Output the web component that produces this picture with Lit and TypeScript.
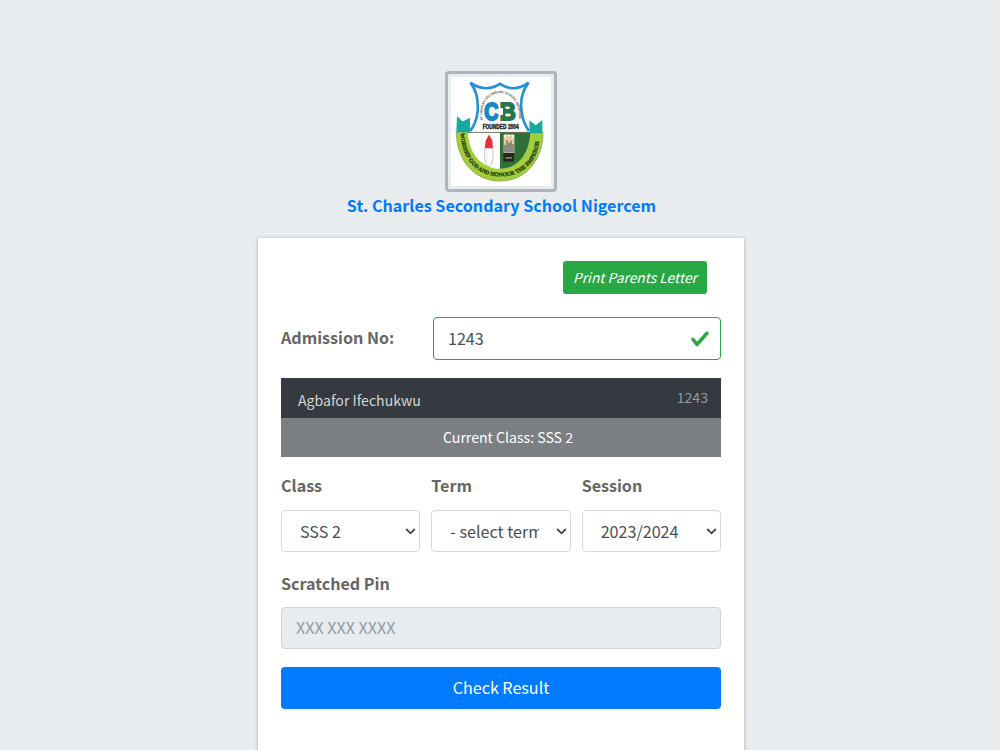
import { LitElement, html, css } from 'lit'
import { customElement, property, state } from 'lit/decorators.js'

@customElement('school-crest')
export class SchoolCrest extends LitElement {
    static styles = css`
        :host {
            display: block;
            flex: none;
            box-sizing: border-box;
            width: 112px;
            height: 121px;
            padding: 3px;
            border: 3px solid #adb5bd;
            border-radius: 4px;
        }

        svg {
            display: block;
            width: 100px;
            height: 109px;
            background: #fff;
        }

        .motto {
            font: bold 17px 'Liberation Serif', serif;
            fill: #1d3a12;
            stroke: #1d3a12;
            stroke-width: 0.8;
        }

        .name {
            font: bold 10px 'Liberation Sans', sans-serif;
            fill: #555;
        }

        .initials {
            font: bold 72px 'Liberation Sans', sans-serif;
            stroke-width: 6;
        }

        .founded {
            font: bold 19px 'Liberation Sans', sans-serif;
            fill: #222;
            stroke: #222;
            stroke-width: 1.2;
        }
    `

    render() {
        return html`
            <svg viewBox="33 33 300 330" preserveAspectRatio="none">
                <path d="M49 200H309C309 286 256 348 180 348S49 286 49 200Z" fill="#a2ce3a" stroke="#7d9a4a" stroke-width="2" />
                <path d="M84 201H271C269 264 234 311 180 311S86 264 84 201Z" fill="#fff" />
                <path d="M180 201H271C269 264 234 311 180 311Z" fill="#2f7038" />
                <path d="M51 151L68 168L90 156V200H49Z" fill="#16aaa0" />
                <path d="M268 164L287 179L307 163V203H269Z" fill="#16aaa0" />
                <path
                    d="M90 50Q136 84 180 52Q222 84 267 50Q239 84 244 132Q248 172 267 198H91Q108 174 113 137Q117 82 90 50Z"
                    fill="#fff"
                />
                <path
                    d="M91 196Q109 172 113 137Q117 82 91 50Q136 82 180 54Q222 82 266 50Q239 84 244 132Q248 172 267 196"
                    fill="none"
                    stroke="#2790d4"
                    stroke-width="8"
                />
                <path id="name-arc" d="M128 164C112 54 248 54 236 166" fill="none" />
                <text class="name">
                    <textPath href="#name-arc" textLength="220">ST CHARLES SECONDARY SCHOOL NIGERCEM</textPath>
                </text>
                <text class="initials" x="133" y="162" textLength="43" lengthAdjust="spacingAndGlyphs" fill="#1687c9" stroke="#1687c9">C</text>
                <text class="initials" x="179" y="162" textLength="48" lengthAdjust="spacingAndGlyphs" fill="#27774c" stroke="#27774c">B</text>
                <path d="M178 105V168" stroke="#fff" stroke-width="4" />
                <path d="M178 127H189V148H178Z" fill="#fff" />
                <path d="M84 201H271" stroke="#555" stroke-width="2" />
                <text class="founded" x="128" y="190" textLength="108" lengthAdjust="spacingAndGlyphs">FOUNDED 2004</text>
                <path d="M134 249L137 226L147 207L157 225L159 249Z" fill="#e23239" />
                <path d="M134 249H159V280Q156 301 147 304Q137 300 134 280Z" fill="#fff" stroke="#b9a5a5" stroke-width="2" />
                <path d="M140 249V291" stroke="#ddd" stroke-width="2" />
                <path d="M191 207H223V263H191Z" fill="#f4eddc" />
                <path d="M190 263H222V289H190Z" fill="#242522" />
                <path d="M195 262V238M201 262V224M207 262V232M213 262V226M219 262V236" stroke="#272a20" stroke-width="3" />
                <path d="M195 238V216M201 226V211M207 234V212M213 228V210M219 238V218" stroke="#d5a151" stroke-width="2.5" />
                <path d="M196 278H216" stroke="#9e9b5a" stroke-width="4" />
                <path id="motto-arc" d="M62 203C65 280 110 334 180 334S300 285 297 210" fill="none" />
                <text class="motto">
                    <textPath href="#motto-arc" textLength="372" lengthAdjust="spacingAndGlyphs">WORSHIP GOD AND HONOUR THE EMPEROR</textPath>
                </text>
            </svg>
        `
    }
}

@customElement('select-field')
export class SelectField extends LitElement {
    static styles = css`
        :host {
            display: block;
            min-width: 0;
        }

        label {
            display: block;
            height: 27px;
            margin-bottom: 9px;
            font-weight: 700;
            line-height: 23px;
            color: #666;
        }

        .control {
            position: relative;
        }

        select {
            display: block;
            box-sizing: border-box;
            width: 100%;
            height: 42px;
            padding: 0 31px 1px 18px;
            font: inherit;
            color: #495057;
            background: #fff;
            border: 1px solid #d7dbdf;
            border-radius: 4px;
            appearance: none;
        }

        svg {
            position: absolute;
            top: 17px;
            right: 4px;
            width: 11px;
            height: 9px;
            pointer-events: none;
        }
    `

    @property() label = ''
    @property() value = ''

    render() {
        return html`
            <label for="field">${this.label}</label>
            <div class="control">
                <select id="field">
                    <option>${this.value}</option>
                </select>
                <svg viewBox="0 0 11 9">
                    <path d="M1.2 2L5.5 6.3L9.8 2" fill="none" stroke="#41464b" stroke-width="1.8" />
                </svg>
            </div>
        `
    }
}

@customElement('app-root')
export class AppRoot extends LitElement {
    static styles = css`
        :host {
            display: flex;
            flex-direction: column;
            align-items: center;
            box-sizing: border-box;
            height: 750px;
            padding: 71px 0 0 2px;
            overflow: hidden;
            background: #e9ecef;
            font: 16.1px 'Noto Sans CJK SC', sans-serif;
            color: #666;
        }

        .school {
            flex: none;
            height: 46px;
            padding-left: 1px;
            font-weight: 700;
            line-height: 26px;
            color: #007bff;
            text-decoration: none;
            white-space: nowrap;
        }

        .card {
            box-sizing: border-box;
            width: 486px;
            height: 540px;
            flex: none;
            padding: 23px;
            background: #fff;
            box-shadow: 0 0 2px rgba(0, 0, 0, 0.13), 0 1px 4px rgba(0, 0, 0, 0.2);
        }

        button {
            display: block;
            padding: 0 0 2px;
            border: 0;
            border-radius: 4px;
            font: inherit;
            color: #fff;
        }

        .print {
            width: 144px;
            height: 33px;
            margin: 0 14px 23px auto;
            border-radius: 3px;
            background: #28a745;
            font-size: 13.8px;
            font-style: italic;
        }

        .admission {
            display: grid;
            grid-template-columns: 1fr 288px;
            align-items: center;
            margin-bottom: 18px;
        }

        .label {
            display: block;
            font-weight: 700;
            line-height: 24px;
        }

        .admission .label {
            padding-bottom: 4px;
        }

        .entry {
            position: relative;
        }

        input {
            display: block;
            box-sizing: border-box;
            width: 100%;
            height: 43px;
            padding: 0 14px 2px;
            border: 1px solid #ced4da;
            border-radius: 4px;
            font: inherit;
            color: #495057;
        }

        .valid {
            border-color: #28a745;
        }

        .tick {
            position: absolute;
            top: 12px;
            right: 11px;
            width: 20px;
            height: 20px;
        }

        .student {
            margin-bottom: 17px;
            font-size: 14.1px;
            color: #fff;
        }

        .identity {
            display: flex;
            justify-content: space-between;
            box-sizing: border-box;
            height: 40px;
            padding: 8px 13px 0 17px;
            background: #343a40;
            line-height: 22px;
        }

        .student-name {
            padding-top: 3px;
            color: #d3d6d8;
        }

        .number {
            color: #979b9f;
        }

        .current {
            height: 39px;
            padding-left: 14px;
            background: #7b7e82;
            line-height: 39px;
            text-align: center;
        }

        .selects {
            display: grid;
            grid-template-columns: repeat(3, 1fr);
            gap: 11px;
            margin-bottom: 19px;
        }

        .pin {
            margin: 12px 0 18px;
            background: #e9ecef;
            height: 42px;
        }

        .pin::placeholder {
            color: #939ba2;
            opacity: 1;
        }

        .check {
            width: 100%;
            height: 42px;
            background: #007bff;
        }
    `

    @state() admission = '1243'

    render() {
        return html`
            <school-crest></school-crest>
            <a class="school">St. Charles Secondary School Nigercem</a>
            <div class="card">
                <button class="print">Print Parents Letter</button>
                <div class="admission">
                    <label class="label" for="admission">Admission No:</label>
                    <div class="entry">
                        <input id="admission" class="valid" .value=${this.admission} />
                        <svg class="tick" viewBox="0 0 8 8">
                            <path
                                fill="#28a745"
                                d="M2.3 6.73L.6 4.53c-.4-1.04.46-1.4 1.1-.8l1.1 1.4 3.4-3.8c.6-.63 1.6-.27 1.2.7l-4 4.6c-.43.5-.8.4-1.1.1z"
                            />
                        </svg>
                    </div>
                </div>
                <div class="student">
                    <div class="identity">
                        <span class="student-name">Agbafor Ifechukwu</span>
                        <span class="number">${this.admission}</span>
                    </div>
                    <div class="current">Current Class: SSS 2</div>
                </div>
                <div class="selects">
                    <select-field label="Class" value="SSS 2"></select-field>
                    <select-field label="Term" value="- select term -"></select-field>
                    <select-field label="Session" value="2023/2024"></select-field>
                </div>
                <label class="label" for="pin">Scratched Pin</label>
                <input id="pin" class="pin" placeholder="XXX XXX XXXX" disabled />
                <button class="check">Check Result</button>
            </div>
        `
    }
}
